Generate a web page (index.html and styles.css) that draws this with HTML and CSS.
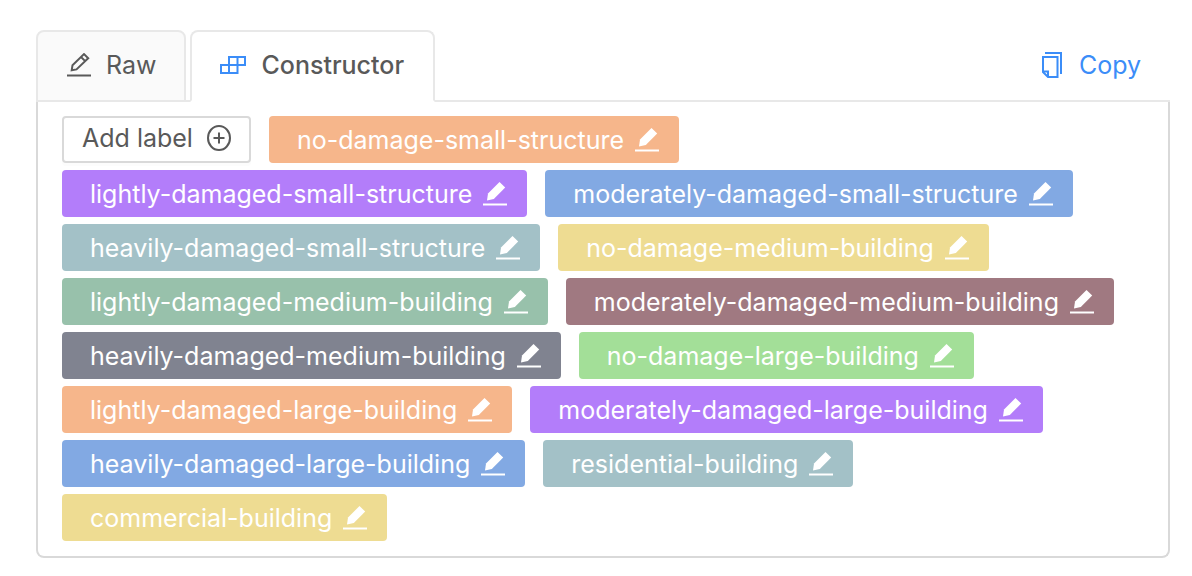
FILE: index.html
```html
<!DOCTYPE html>
<html lang="en">
<head>
<meta charset="utf-8">
<meta name="viewport" content="width=device-width, initial-scale=1">
<title>Label constructor</title>
<link rel="stylesheet" href="styles.css">
</head>
<body>
<svg class="sprite" aria-hidden="true">
  <symbol id="edit" viewBox="0 0 24 24"><path d="M4 18.500 5 11.500 16.500 0 22.200 5.600 10.800 17Z" fill="currentColor"/><path d="M0 22.500h24" stroke="currentColor" stroke-width="2"/></symbol>
</svg>
<main class="editor">
  <header class="bar">
    <div class="tabs" role="tablist">
      <button class="tab" role="tab" aria-selected="false" type="button">
        <svg class="tab-icon" viewBox="0 0 24 24" fill="none" stroke="currentColor" stroke-width="2"><path d="M4.700 17.300 5.500 12.200 17 1.100 21.200 5.200 9.500 16.400ZM14 4l4.200 4.100"/><path d="M0 22.500h24"/></svg>
        <span>Raw</span>
      </button>
      <button class="tab active" role="tab" aria-selected="true" type="button">
        <svg class="blocks" viewBox="0 0 26 18" fill="none" stroke="#3b8df8" stroke-width="2"><path d="M9 1h16v8H9zM1 9h16.500v8H1zM17.500 1v8M9 9v8"/></svg>
        <span>Constructor</span>
      </button>
    </div>
    <button class="copy" type="button">
      <svg class="copy-icon" viewBox="0 0 22 26" fill="none" stroke="currentColor" stroke-width="2"><path d="M4 1h16v21"/><path d="M2 5h14.500v20H7l-5-5z"/><path d="M2 19.500h5V25"/></svg>
      <span>Copy</span>
    </button>
  </header>
  <section class="panel" role="tabpanel">
    <button class="add" type="button">
      <span>Add label</span>
      <svg class="plus" viewBox="0 0 24 26" fill="none" stroke="currentColor" stroke-width="2"><ellipse cx="12" cy="13" rx="11" ry="12"/><path d="M6.500 13h11M12 7.500v11"/></svg>
    </button>
    <button class="chip orange" type="button"><span>no-damage-small-structure</span><svg class="edit"><use href="#edit"/></svg></button>
    <button class="chip purple" type="button"><span>lightly-damaged-small-structure</span><svg class="edit"><use href="#edit"/></svg></button>
    <button class="chip blue" type="button"><span>moderately-damaged-small-structure</span><svg class="edit"><use href="#edit"/></svg></button>
    <button class="chip teal" type="button"><span>heavily-damaged-small-structure</span><svg class="edit"><use href="#edit"/></svg></button>
    <button class="chip yellow" type="button"><span>no-damage-medium-building</span><svg class="edit"><use href="#edit"/></svg></button>
    <button class="chip sage" type="button"><span>lightly-damaged-medium-building</span><svg class="edit"><use href="#edit"/></svg></button>
    <button class="chip plum" type="button"><span>moderately-damaged-medium-building</span><svg class="edit"><use href="#edit"/></svg></button>
    <button class="chip slate" type="button"><span>heavily-damaged-medium-building</span><svg class="edit"><use href="#edit"/></svg></button>
    <button class="chip green" type="button"><span>no-damage-large-building</span><svg class="edit"><use href="#edit"/></svg></button>
    <button class="chip orange" type="button"><span>lightly-damaged-large-building</span><svg class="edit"><use href="#edit"/></svg></button>
    <button class="chip purple" type="button"><span>moderately-damaged-large-building</span><svg class="edit"><use href="#edit"/></svg></button>
    <button class="chip blue" type="button"><span>heavily-damaged-large-building</span><svg class="edit"><use href="#edit"/></svg></button>
    <button class="chip teal" type="button"><span>residential-building</span><svg class="edit"><use href="#edit"/></svg></button>
    <button class="chip yellow" type="button"><span>commercial-building</span><svg class="edit"><use href="#edit"/></svg></button>
  </section>
</main>
</body>
</html>
```
FILE: styles.css
```css
* { box-sizing: border-box; }
body {
  margin: 0;
  background: #fff;
  color: #595959;
  font: 25px/32px Inter, "Liberation Sans", sans-serif;
}
button {
  font: inherit;
  color: inherit;
  background: none;
  border: 0;
  padding: 0;
  cursor: pointer;
  white-space: nowrap;
}
svg { flex: none; display: block; }
.sprite { position: absolute; width: 0; height: 0; }
.editor { padding: 30px 22px 18px 36px; }
.bar {
  display: flex;
  justify-content: space-between;
  box-shadow: inset 0 -2px #e8e8e8;
}
.tabs { display: flex; gap: 4px; }
.tab {
  display: flex;
  align-items: center;
  height: 72px;
  padding: 0 28px 2px 29px;
  gap: 15px;
  background: #fafafa;
  border: 2px solid #e8e8e8;
  border-radius: 8px 8px 0 0;
}
.tab.active {
  padding: 0 29px 2px 28px;
  background: #fff;
  border-bottom-color: #fff;
  font-weight: 500;
}
.tab-icon { width: 24px; height: 24px; }
.blocks { width: 26px; height: 18px; }
.copy {
  display: flex;
  align-items: center;
  gap: 16px;
  margin-right: 29px;
  padding-bottom: 2px;
  color: #3b8df8;
}
.copy-icon { width: 22px; height: 26px; }
.panel {
  display: flex;
  flex-wrap: wrap;
  align-items: center;
  gap: 7px 18px;
  padding: 14px 24px 15px;
  border: 2px solid #d9d9d9;
  border-top: 0;
  border-radius: 0 0 8px 8px;
}
.add, .chip {
  display: flex;
  align-items: center;
  height: 47px;
  border-radius: 4px;
}
.add {
  gap: 14px;
  padding: 0 18px 4px;
  border: 2px solid #d9d9d9;
  box-shadow: 0 3px 0 #fcfcfc;
}
.plus { width: 24px; height: 26px; }
.chip { gap: 11px; padding: 0 20px 0 28px; color: #fff; }
.edit { width: 24px; height: 24px; }
.orange { background: #f6b68b; }
.purple { background: #b37dfa; }
.blue { background: #82a9e3; }
.teal { background: #a3c1c7; }
.yellow { background: #eedc92; }
.sage { background: #98c1ab; }
.plum { background: #a07981; }
.slate { background: #808390; }
.green { background: #a3df98; }
```
